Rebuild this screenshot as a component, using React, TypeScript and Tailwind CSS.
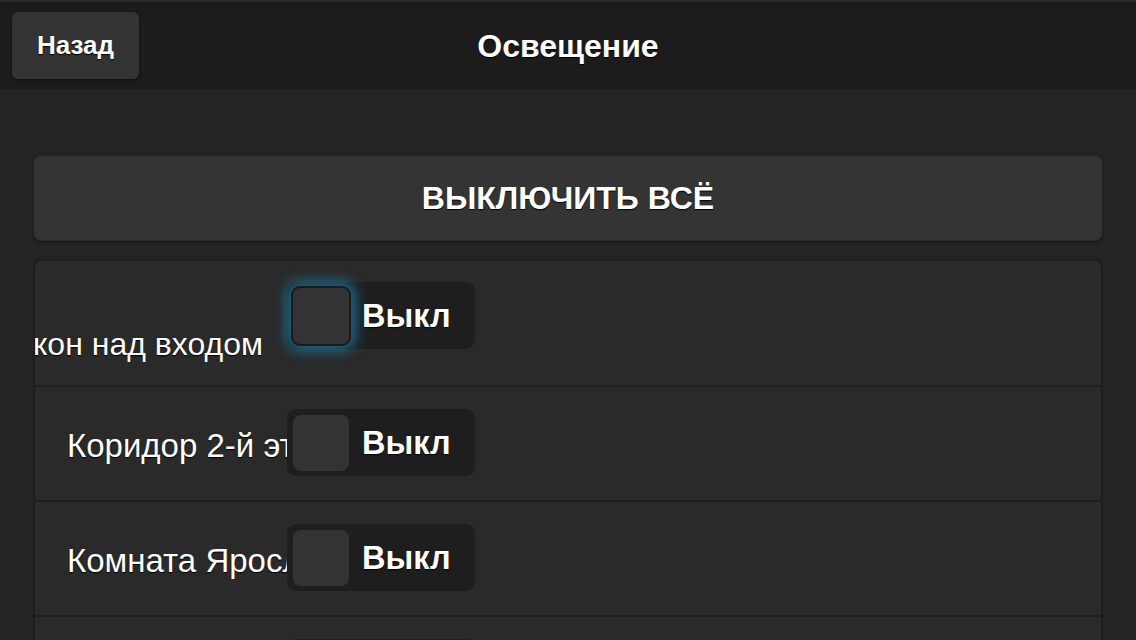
import { FC } from 'react'

const shadow = '[text-shadow:0_1px_1px_#000]'

const Toggle: FC<{ focused?: boolean }> = ({ focused }) => {
  return (
    <div className="flex h-[67px] w-[188px] shrink-0 items-center rounded-[9px] bg-[#1e1e1e]">
      {focused ? (
        <div className="ml-[4px] h-[60px] w-[60px] rounded-[9px] border-2 border-[#1a1a1a] bg-[#333333] shadow-[0_0_14px_4px_rgba(30,140,190,0.75)]" />
      ) : (
        <div className="ml-[6px] h-[56px] w-[56px] rounded-[8px] bg-[#333333]" />
      )}
      <span
        className={`text-[32.5px] font-bold leading-[30px] text-white ${shadow} ${
          focused ? 'ml-[11px]' : 'ml-[13px]'
        }`}
      >
        Выкл
      </span>
    </div>
  )
}

const rows = [
  { label: 'кон над входом', focused: true },
  { label: 'Коридор 2-й этаж' },
  { label: 'Комната Ярослава' },
  { label: 'Кухня' },
]

export default function App() {
  return (
    <div className="h-[640px] w-[1136px] overflow-hidden bg-[#242424] font-['Liberation_Sans',Arial,sans-serif] text-white">
      <header className="grid h-[89px] grid-cols-[150px_1fr_150px] items-center border-t-2 border-[#2a2a2a] bg-[#1c1c1c]">
        <button className="ml-[12px] h-[67px] w-[127px] rounded-[6px] bg-[#333333] text-[26px] font-bold text-white shadow-[0_1px_3px_rgba(0,0,0,0.5)]">
          <span className={shadow}>Назад</span>
        </button>
        <h1 className={`text-center text-[32px] font-bold ${shadow}`}>Освещение</h1>
        <div />
      </header>

      <main className="px-[33px] pt-[66px]">
        <button className="flex h-[86px] w-full items-center justify-center rounded-[8px] border border-[#2a2a2a] bg-[#343434] shadow-[0_1px_3px_rgba(0,0,0,0.45)]">
          <span className={`text-[32px] font-bold ${shadow}`}>ВЫКЛЮЧИТЬ ВСЁ</span>
        </button>

        <div className="mt-[18px] overflow-hidden rounded-t-[8px] border-x-2 border-t-2 border-[#1f1f1f] bg-[#2a2a2a]">
          {rows.map((r, i) => (
            <div
              key={i}
              className={`flex items-start border-b-2 border-[#1f1f1f] ${
                i === 0 ? 'h-[126px] pt-[21px]' : 'h-[115px] pt-[22px]'
              }`}
            >
              {r.focused ? (
                <div className="w-[252px] shrink-0 overflow-hidden whitespace-nowrap pt-[47px]">
                  <span className={`-ml-[2px] text-[32px] leading-[30px] ${shadow}`}>{r.label}</span>
                </div>
              ) : (
                <div className="ml-[32px] w-[220px] shrink-0 overflow-hidden whitespace-nowrap pt-[22px]">
                  <span className={`text-[33px] leading-[30px] ${shadow}`}>{r.label}</span>
                </div>
              )}
              <Toggle focused={r.focused} />
            </div>
          ))}
        </div>
      </main>
    </div>
  )
}
